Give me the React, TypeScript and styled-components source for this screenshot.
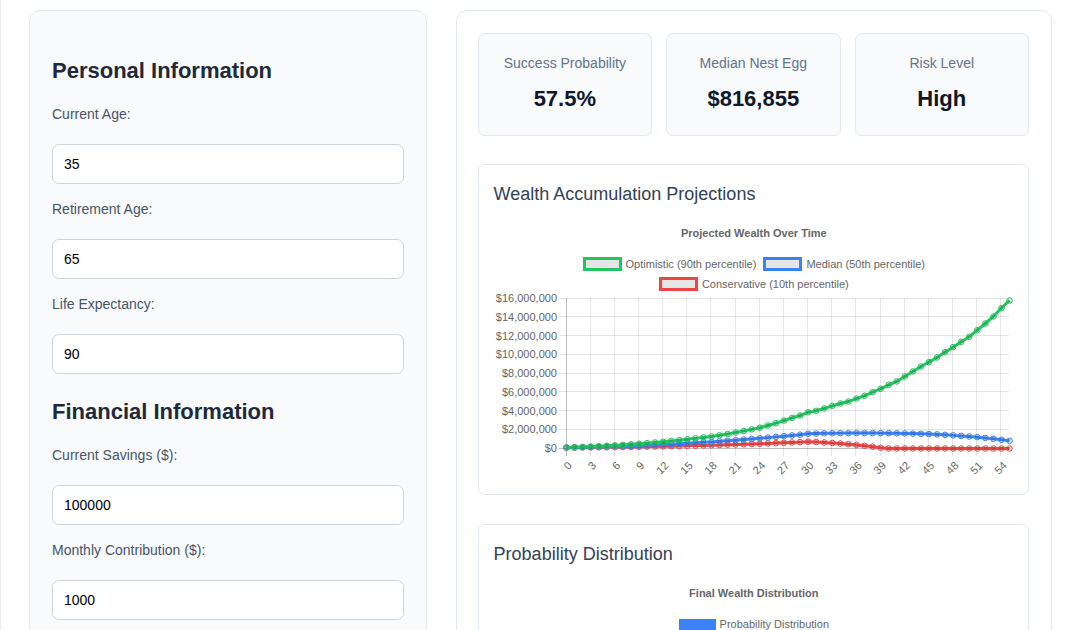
import React, { useLayoutEffect, useRef, useState } from "react";
import styled, { createGlobalStyle } from "styled-components";

const GlobalStyle = createGlobalStyle`
  *, *::before, *::after { box-sizing: border-box; }
  body {
    margin: 0;
    background: #fff;
    color: #334155;
    font-family: "Liberation Sans", Arial, Helvetica, sans-serif;
  }
`;

const Shell = styled.div`
  height: 100vh;
  overflow-y: auto;
  scrollbar-width: none;
  border-left: 1px solid #ececec;
`;

const Main = styled.main`
  display: grid;
  grid-template-columns: minmax(0, 2fr) minmax(0, 3fr);
  gap: 29px;
  padding: 10px 29px 28px 28px;
`;

const Panel = styled.section<{ $tinted?: boolean }>`
  padding: 22px;
  padding-left: ${(p) => (p.$tinted ? 22 : 21)}px;
  border: 1px solid #e2e8f0;
  border-radius: 11px;
  background: ${(p) => (p.$tinted ? "#f8fafc" : "#fff")};
`;

const FormHeading = styled.h2`
  margin: 25px 0 20px;
  color: #1e293b;
  font-size: 22px;
  line-height: 26px;
`;

const Field = styled.div`
  display: flex;
  flex-direction: column;
  gap: 20px;
  margin-bottom: 15px;
`;

const FieldLabel = styled.label`
  color: #475569;
  font-size: 14px;
  line-height: 20px;
`;

const FieldInput = styled.input`
  width: 100%;
  height: 40px;
  padding: 0 11px;
  border: 1px solid #cbd5e1;
  border-radius: 7px;
  background: #fff;
  color: #000;
  font-family: inherit;
  font-size: 14px;
  appearance: textfield;
  &::-webkit-inner-spin-button { appearance: none; margin: 0; }
`;

const Stats = styled.div`
  display: grid;
  grid-template-columns: repeat(3, minmax(0, 1fr));
  gap: 14px;
  margin-bottom: 28px;
`;

const StatCard = styled.div`
  padding: 19px 14px 21px;
  border: 1px solid #e2e8f0;
  border-radius: 7px;
  background: #f8fafc;
  text-align: center;
`;

const StatLabel = styled.div`
  margin-bottom: 11px;
  color: #64748b;
  font-size: 14px;
  line-height: 20px;
`;

const StatValue = styled.div`
  color: #0f172a;
  font-size: 22px;
  font-weight: 700;
  line-height: 30px;
`;

const ChartCard = styled.article`
  margin-bottom: 29px;
  padding: 14px 14px 14px 15px;
  border: 1px solid #e2e8f0;
  border-radius: 7px;
`;

const ChartHeading = styled.h3`
  margin: 4px 0 21px;
  color: #334155;
  font-size: 18px;
  font-weight: 400;
  line-height: 22px;
`;

const Caption = styled.div`
  margin-bottom: 14px;
  color: #666;
  font-size: 11px;
  font-weight: 700;
  line-height: 14px;
  text-align: center;
`;

const Legend = styled.ul`
  display: flex;
  flex-wrap: wrap;
  justify-content: center;
  gap: 0 7px;
  margin: 0;
  padding: 0 60px;
  list-style: none;
`;

const LegendItem = styled.li`
  display: flex;
  align-items: center;
  gap: 4px;
  height: 20px;
  color: #666;
  font-size: 11px;
  line-height: 14px;
`;

const Swatch = styled.span<{ $color: string; $solid?: boolean }>`
  width: ${(p) => (p.$solid ? 37 : 39)}px;
  height: ${(p) => (p.$solid ? 11 : 14)}px;
  border: ${(p) => (p.$solid ? 0 : 3)}px solid ${(p) => p.$color};
  background: ${(p) => (p.$solid ? p.$color : "#e5e5e5")};
`;

const Plot = styled.div`
  height: 186px;
`;

const PlotSvg = styled.svg`
  display: block;
  overflow: visible;
  text {
    fill: #666;
    font-size: 11px;
  }
`;

const GREEN = "#22c55e";
const BLUE = "#3b82f6";
const RED = "#ef4444";

// Yearly balances, in thousands of dollars.
const optimistic = [
  100, 135, 165, 200, 240, 285, 330, 385, 445, 505, 570, 640, 715, 800, 890, 985, 1080, 1180, 1290,
  1415, 1550, 1700, 1870, 2040, 2220, 2450, 2700, 2985, 3270, 3520, 3870, 4020, 4270, 4550, 4800,
  5010, 5330, 5620, 6010, 6365, 6790, 7150, 7680, 8215, 8750, 9210, 9710, 10280, 10810, 11380,
  11910, 12620, 13335, 14080, 14970, 15790,
];
const median = [
  100, 120, 140, 160, 180, 205, 230, 255, 285, 315, 350, 385, 425, 465, 510, 555, 605, 655, 705,
  765, 825, 885, 950, 1020, 1090, 1160, 1240, 1315, 1395, 1475, 1570, 1600, 1620, 1635, 1640, 1645,
  1645, 1645, 1645, 1640, 1635, 1625, 1610, 1590, 1565, 1535, 1500, 1455, 1400, 1345, 1285, 1210,
  1130, 1030, 925, 817,
];
const conservative = [
  100, 105, 112, 120, 128, 138, 148, 160, 172, 185, 200, 215, 232, 250, 268, 288, 308, 330, 352,
  376, 400, 426, 452, 480, 510, 540, 575, 610, 645, 680, 720, 690, 640, 590, 530, 460, 380, 290,
  190, 80, ...Array(16).fill(0),
];

const series = [
  { color: RED, values: conservative },
  { color: BLUE, values: median },
  { color: GREEN, values: optimistic },
];

const LAST_YEAR = optimistic.length - 1;
const AXIS_MAX = 16000;
const yTicks = Array.from({ length: 9 }, (_, i) => i * 2000);
const xTicks = Array.from({ length: 19 }, (_, i) => i * 3);
const crisp = (n: number) => Math.floor(n) + 0.5;

function WealthPlot() {
  const box = useRef<HTMLDivElement>(null);
  const [width, setWidth] = useState(520);

  useLayoutEffect(() => {
    const el = box.current;
    if (!el) return;
    const measure = () => setWidth(Math.floor(el.clientWidth));
    measure();
    const observer = new ResizeObserver(measure);
    observer.observe(el);
    return () => observer.disconnect();
  }, []);

  const left = 72;
  const right = width - 5;
  const top = 4;
  const bottom = 154;
  const x = (year: number) => left + ((right - left) * year) / LAST_YEAR;
  const y = (value: number) => bottom - ((bottom - top) * value) / AXIS_MAX;

  return (
    <Plot ref={box}>
      <PlotSvg width={width} height={186} role="img" aria-label="Projected wealth over time">
        {yTicks.map((tick) => (
          <g key={tick}>
            <line
              x1={left - 7}
              x2={right}
              y1={crisp(y(tick))}
              y2={crisp(y(tick))}
              stroke={tick === 0 ? "rgba(0,0,0,0.25)" : "rgba(0,0,0,0.1)"}
            />
            <text x={left - 9} y={Math.round(y(tick)) + 4} textAnchor="end">
              {"$" + (tick * 1000).toLocaleString("en-US")}
            </text>
          </g>
        ))}
        {xTicks.map((tick) => (
          <g key={tick}>
            <line
              x1={crisp(x(tick))}
              x2={crisp(x(tick))}
              y1={top}
              y2={bottom + 8}
              stroke={tick === 0 ? "rgba(0,0,0,0.25)" : "rgba(0,0,0,0.1)"}
            />
            <text
              transform={`translate(${x(tick) + 1} ${bottom + 14}) rotate(-45)`}
              textAnchor="end"
              dy="7"
              dx="1"
            >
              {tick}
            </text>
          </g>
        ))}
        {series.map(({ color, values }) => (
          <g key={color} stroke={color}>
            <polyline
              fill="none"
              strokeWidth="3"
              points={values.map((v, i) => `${x(i) + 0.5},${y(v) + 0.5}`).join(" ")}
            />
            {values.map((v, i) => (
              <circle key={i} cx={x(i) + 0.5} cy={y(v) + 0.5} r="2.8" fill="rgba(0,0,0,0.1)" />
            ))}
          </g>
        ))}
      </PlotSvg>
    </Plot>
  );
}

function NumberField({ id, label, value }: { id: string; label: string; value: number }) {
  return (
    <Field>
      <FieldLabel htmlFor={id}>{label}</FieldLabel>
      <FieldInput id={id} type="number" defaultValue={value} />
    </Field>
  );
}

function Stat({ label, value }: { label: string; value: string }) {
  return (
    <StatCard>
      <StatLabel>{label}</StatLabel>
      <StatValue>{value}</StatValue>
    </StatCard>
  );
}

export default function App() {
  return (
    <>
      <GlobalStyle />
      <Shell>
        <Main>
          <Panel $tinted>
            <FormHeading>Personal Information</FormHeading>
            <NumberField id="age" label="Current Age:" value={35} />
            <NumberField id="retirement" label="Retirement Age:" value={65} />
            <NumberField id="life" label="Life Expectancy:" value={90} />
            <FormHeading>Financial Information</FormHeading>
            <NumberField id="savings" label="Current Savings ($):" value={100000} />
            <NumberField id="contribution" label="Monthly Contribution ($):" value={1000} />
          </Panel>
          <Panel>
            <Stats>
              <Stat label="Success Probability" value="57.5%" />
              <Stat label="Median Nest Egg" value="$816,855" />
              <Stat label="Risk Level" value="High" />
            </Stats>
            <ChartCard>
              <ChartHeading>Wealth Accumulation Projections</ChartHeading>
              <Caption>Projected Wealth Over Time</Caption>
              <Legend>
                <LegendItem>
                  <Swatch $color={GREEN} />
                  Optimistic (90th percentile)
                </LegendItem>
                <LegendItem>
                  <Swatch $color={BLUE} />
                  Median (50th percentile)
                </LegendItem>
                <LegendItem>
                  <Swatch $color={RED} />
                  Conservative (10th percentile)
                </LegendItem>
              </Legend>
              <WealthPlot />
            </ChartCard>
            <ChartCard>
              <ChartHeading>Probability Distribution</ChartHeading>
              <Caption>Final Wealth Distribution</Caption>
              <Legend>
                <LegendItem>
                  <Swatch $color={BLUE} $solid />
                  Probability Distribution
                </LegendItem>
              </Legend>
            </ChartCard>
          </Panel>
        </Main>
      </Shell>
    </>
  );
}
